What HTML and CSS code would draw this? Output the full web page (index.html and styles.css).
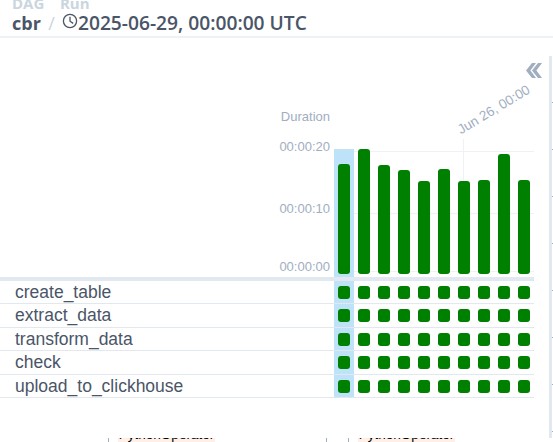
FILE: index.html
```html
<!DOCTYPE html>
<html lang="en">
<head>
    <meta charset="UTF-8">
    <meta name="viewport" content="width=device-width, initial-scale=1.0">
    <title>cbr</title>
    <link rel="stylesheet" href="styles.css">
</head>
<body>
    <header class="crumbs">
        <div class="crumb">
            <span class="crumb-label">DAG</span>
            <span class="crumb-value">cbr</span>
        </div>
        <span class="crumb-sep">/</span>
        <div class="crumb">
            <span class="crumb-label">Run</span>
            <span class="crumb-value run-value">
                <svg class="clock" width="16" height="16" viewBox="0 0 16 16" fill="none" stroke="#4a5568" stroke-width="1.3">
                    <circle cx="8" cy="8" r="6.6"/>
                    <path d="M8 3.8V8.2L11.2 10.4"/>
                </svg>2025-06-29, 00:00:00 UTC
            </span>
        </div>
    </header>

    <main class="grid-view">
        <section class="chart">
            <span class="axis-title">Duration</span>
            <span class="axis-tick tick-20">00:00:20</span>
            <span class="axis-tick tick-10">00:00:10</span>
            <span class="axis-tick tick-00">00:00:00</span>
            <div class="grid-line line-20"></div>
            <div class="grid-line line-10"></div>
            <div class="grid-line line-00"></div>
            <div class="date-line"></div>
            <span class="date-label">Jun 26, 00:00</span>
            <svg class="collapse" width="16" height="15" viewBox="0 0 16 15" fill="#a0aec0">
                <path d="M6 0L0 7.5L6 15H10L4.4 7.5L10 0Z"/>
                <path d="M12 0L6 7.5L12 15H16L10.4 7.5L16 0Z"/>
            </svg>
            <div class="bars">
                <div class="bar-col selected"><div class="bar" style="height:110px"></div></div>
                <div class="bar-col"><div class="bar" style="height:125px"></div></div>
                <div class="bar-col"><div class="bar" style="height:109px"></div></div>
                <div class="bar-col"><div class="bar" style="height:104px"></div></div>
                <div class="bar-col"><div class="bar" style="height:93px"></div></div>
                <div class="bar-col"><div class="bar" style="height:105px"></div></div>
                <div class="bar-col"><div class="bar" style="height:93px"></div></div>
                <div class="bar-col"><div class="bar" style="height:94px"></div></div>
                <div class="bar-col"><div class="bar" style="height:120px"></div></div>
                <div class="bar-col"><div class="bar" style="height:94px"></div></div>
            </div>
        </section>

        <section class="tasks" id="tasks"></section>
    </main>

    <div class="drawer-edge"></div>

    <div class="graph-peek">
        <div class="peek-node">
            <div class="peek-pill"><span class="peek-text">PythonOperator</span></div>
        </div>
        <div class="peek-node">
            <div class="peek-pill"><span class="peek-text">PythonOperator</span></div>
        </div>
    </div>

    <script>
        const taskNames = ["create_table", "extract_data", "transform_data", "check", "upload_to_clickhouse"];
        const rowHeights = [23, 24, 23, 24, 23];
        const tasksEl = document.getElementById("tasks");

        taskNames.forEach((name, i) => {
            const row = document.createElement("div");
            row.classList.add("task-row");
            row.style.height = rowHeights[i] + "px";

            const nameEl = document.createElement("div");
            nameEl.classList.add("task-name");
            nameEl.textContent = name;
            row.appendChild(nameEl);

            for (let c = 0; c < 10; c++) {
                const cell = document.createElement("div");
                cell.classList.add("cell");
                if (c === 0) cell.classList.add("selected");
                const square = document.createElement("div");
                square.classList.add("square");
                cell.appendChild(square);
                row.appendChild(cell);
            }

            tasksEl.appendChild(row);
        });
    </script>
</body>
</html>
```

FILE: styles.css
```css
html, body {
    margin: 0;
    height: 442px;
    overflow: hidden;
    background-color: #fff;
}

body {
    position: relative;
    font-family: "Liberation Sans", Arial, sans-serif;
}

.crumbs {
    display: flex;
    height: 36px;
    padding-left: 12px;
    border-bottom: 2px solid #edf2f7;
    overflow: hidden;
    font-family: "Open Sans", sans-serif;
    font-weight: 600;
}

.crumb {
    display: flex;
    flex-direction: column;
    margin-top: -4px;
}

.crumb-label {
    font-size: 15px;
    line-height: 15px;
    font-weight: 700;
    color: #cbd5e0;
}

.crumb-value {
    font-size: 18px;
    line-height: 24px;
    font-weight: 700;
    color: #4a5568;
}

.crumb-sep {
    margin: 11px 5px 0 4px;
    font-size: 18px;
    line-height: 24px;
    font-weight: 400;
    color: #cbd5e0;
}

.run-value {
    display: flex;
    align-items: center;
    font-size: 19.2px;
    font-weight: 600;
    white-space: nowrap;
}

.clock {
    margin: -4px 0 0 2px;
}

.grid-view {
    width: 534px;
}

.chart {
    position: relative;
    height: 239px;
}

.axis-title,
.axis-tick {
    position: absolute;
    right: 204px;
    font-size: 13px;
    line-height: 14px;
    color: #a0aec0;
}

.axis-title { top: 72px; }
.tick-20 { top: 102px; }
.tick-10 { top: 164px; }
.tick-00 { top: 222px; }

.grid-line {
    position: absolute;
    left: 334px;
    right: 0;
    height: 1px;
    background-color: #edf2f7;
}

.line-20 { top: 113px; }
.line-10 { top: 175px; }
.line-00 { top: 233px; }

.date-line {
    position: absolute;
    left: 463px;
    top: 101px;
    width: 1px;
    height: 133px;
    background-color: #edf2f7;
}

.date-label {
    position: absolute;
    left: 453px;
    top: 65px;
    font-size: 13.5px;
    line-height: 14px;
    color: #a0aec0;
    white-space: nowrap;
    transform: rotate(-31deg);
}

.collapse {
    position: absolute;
    left: 526px;
    top: 25px;
}

.bars {
    position: absolute;
    left: 334px;
    top: 111px;
    display: flex;
    height: 128px;
}

.bar-col {
    display: flex;
    flex-direction: column;
    justify-content: flex-end;
    box-sizing: border-box;
    width: 20px;
    padding: 0 4px 3px;
}

.selected {
    background-color: #bee3f8;
}

.bar {
    background-color: #008000;
    border-radius: 3px;
}

.tasks {
    border-top: 4px solid #e2e8f0;
}

.task-row {
    display: flex;
    box-sizing: border-box;
    border-bottom: 1px solid #e2e8f0;
}

.task-name {
    width: 319px;
    padding-left: 15px;
    font-size: 17.5px;
    line-height: 22px;
    color: #4a5568;
}

.cell {
    display: flex;
    align-items: center;
    justify-content: center;
    width: 20px;
}

.square {
    width: 12px;
    height: 13px;
    background-color: #008000;
    border-radius: 3px;
}

.drawer-edge {
    position: absolute;
    top: 56px;
    right: 0;
    width: 4px;
    height: 382px;
    background:
        repeating-linear-gradient(to bottom, transparent 0, transparent 46px, #a0aec0 46px, #a0aec0 47px) right / 1px 100% no-repeat,
        linear-gradient(#e2e8f0, #e2e8f0) left / 3px 100% no-repeat;
}

.graph-peek {
    position: absolute;
    left: 108px;
    top: 438px;
    display: flex;
    gap: 21px;
    height: 4px;
    overflow: hidden;
}

.peek-node {
    box-sizing: border-box;
    width: 219px;
    height: 4px;
    padding-left: 9px;
    border-left: 1px solid #a0aec0;
    border-right: 1px solid #a0aec0;
}

.peek-pill {
    width: 97px;
    height: 4px;
    overflow: hidden;
    background-color: #ffefe6;
    text-align: center;
}

.peek-text {
    display: block;
    margin-top: -10px;
    font-size: 13.5px;
    line-height: 14px;
    color: #000;
    white-space: nowrap;
}
```
